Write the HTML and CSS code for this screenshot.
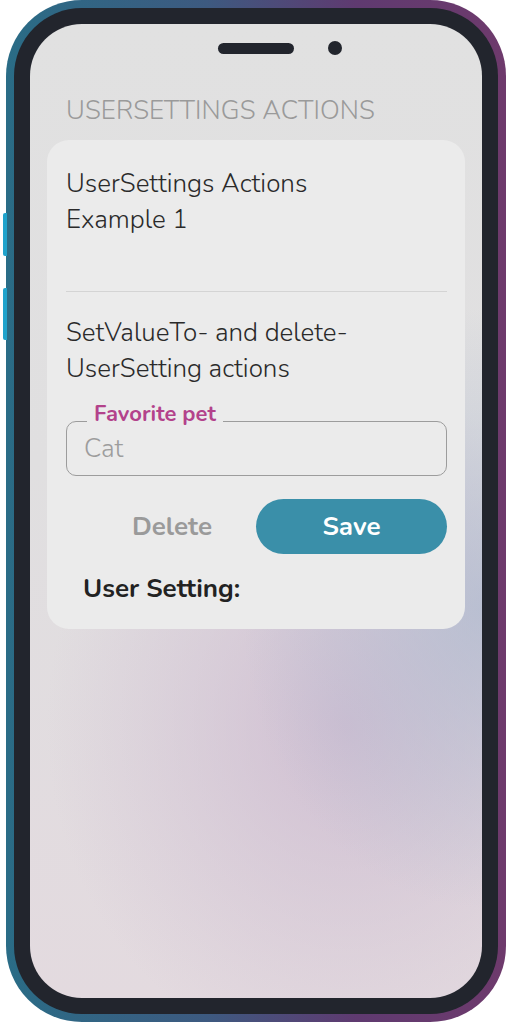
FILE: index.html
```html
<!DOCTYPE html>
<html lang="en">
<head>
    <meta charset="UTF-8">
    <meta name="viewport" content="width=device-width, initial-scale=1.0">
    <title>UserSettings Actions</title>
    <link rel="stylesheet" href="styles.css">
</head>
<body>
    <div class="phone">
        <span class="side-btn side-btn-1"></span>
        <span class="side-btn side-btn-2"></span>
        <div class="frame">
            <div class="screen">
                <div class="notch">
                    <span class="speaker"></span>
                    <span class="camera"></span>
                </div>

                <h1 class="page-title">USERSETTINGS ACTIONS</h1>

                <div class="card">
                    <div class="card-title">UserSettings Actions<br>Example 1</div>
                    <hr class="divider">
                    <div class="card-text">SetValueTo- and delete-<br>UserSetting actions</div>

                    <div class="field">
                        <span class="field-label">Favorite pet</span>
                        <input type="text" class="field-input" placeholder="Cat">
                    </div>

                    <div class="actions">
                        <button class="delete-btn">Delete</button>
                        <button class="save-btn">Save</button>
                    </div>

                    <div class="setting-value">User Setting:</div>
                </div>
            </div>
        </div>
    </div>
</body>
</html>
```

FILE: styles.css
```css
/* Page */
body {
    margin: 0;
    padding: 0;
    background: #ffffff;
    font-family: "Nunito", Lato, "Open Sans", sans-serif;
}

/* Phone shell: coloured rim, dark bezel, screen */
.phone {
    position: relative;
    width: 500px;
    height: 1022px;
    margin-left: 6px;
    padding: 8px;
    box-sizing: border-box;
    border-radius: 76px;
    background: linear-gradient(90deg, #2a6c86 0%, #3d5a80 40%, #5f3a70 70%, #6e3a6c 100%);
}

.side-btn {
    position: absolute;
    left: -3px;
    width: 4px;
    background: #1fa3cc;
    border-radius: 2px 0 0 2px;
}

.side-btn-1 {
    top: 213px;
    height: 43px;
}

.side-btn-2 {
    top: 288px;
    height: 52px;
}

.frame {
    height: 100%;
    padding: 16px;
    box-sizing: border-box;
    border-radius: 68px;
    background: #22252d;
}

.screen {
    height: 100%;
    border-radius: 52px;
    overflow: hidden;
    display: flex;
    flex-direction: column;
    background:
        radial-gradient(ellipse 240px 300px at 100% 60%, rgba(172, 184, 206, 0.7), rgba(172, 184, 206, 0) 100%),
        radial-gradient(ellipse 300px 340px at 70% 72%, rgba(205, 186, 208, 0.85), rgba(205, 186, 208, 0) 100%),
        linear-gradient(180deg, #e1e1e1 0%, #e0dfe0 45%, #e3dadf 100%);
}

/* Speaker + camera */
.notch {
    display: flex;
    justify-content: center;
    align-items: center;
    gap: 34px;
    padding: 17px 0 0 48px;
}

.speaker {
    width: 76px;
    height: 11px;
    border-radius: 6px;
    background: #22252d;
}

.camera {
    width: 14px;
    height: 14px;
    border-radius: 50%;
    background: #22252d;
}

/* Heading */
.page-title {
    margin: 40px 0 13px 36px;
    font-size: 26px;
    line-height: 32px;
    font-weight: 300;
    color: #9a9a9a;
    letter-spacing: 0.1px;
}

/* Card */
.card {
    margin: 0 17px;
    padding: 26px 18px 25px 19px;
    border-radius: 22px;
    background: #ebebeb;
    color: #2a2a2a;
}

.card-title,
.card-text {
    font-size: 26px;
    line-height: 36px;
    font-weight: 300;
}

.divider {
    margin: 53px 0 23px;
    border: none;
    border-top: 1.5px solid #d4d4d4;
}

/* Outlined text field */
.field {
    position: relative;
    margin-top: 34px;
    height: 55px;
    border: 1px solid #9c9c9c;
    border-radius: 10px;
    box-sizing: border-box;
    display: flex;
    align-items: center;
}

.field-label {
    position: absolute;
    left: 20px;
    top: -21px;
    padding: 0 7px;
    background: #ebebeb;
    color: #b3428b;
    font-size: 22px;
    line-height: 26px;
    font-weight: 700;
}

.field-input {
    width: 100%;
    padding: 0 17px;
    border: none;
    background: transparent;
    font-family: inherit;
    font-size: 26px;
    font-weight: 300;
    color: #2a2a2a;
    outline: none;
}

.field-input::placeholder {
    color: #9d9d9d;
}

/* Buttons */
.actions {
    display: flex;
    justify-content: flex-end;
    gap: 9px;
    margin-top: 23px;
}

.actions button {
    height: 55px;
    border: none;
    border-radius: 28px;
    font-family: inherit;
    font-size: 26px;
    font-weight: 700;
    cursor: pointer;
}

.delete-btn {
    width: 150px;
    background: transparent;
    color: #9a9a9a;
}

.save-btn {
    width: 191px;
    background: #3a8fa9;
    color: #ffffff;
}

.setting-value {
    margin: 20px 0 0 17px;
    font-size: 26px;
    line-height: 30px;
    font-weight: 700;
    color: #222222;
}
```
